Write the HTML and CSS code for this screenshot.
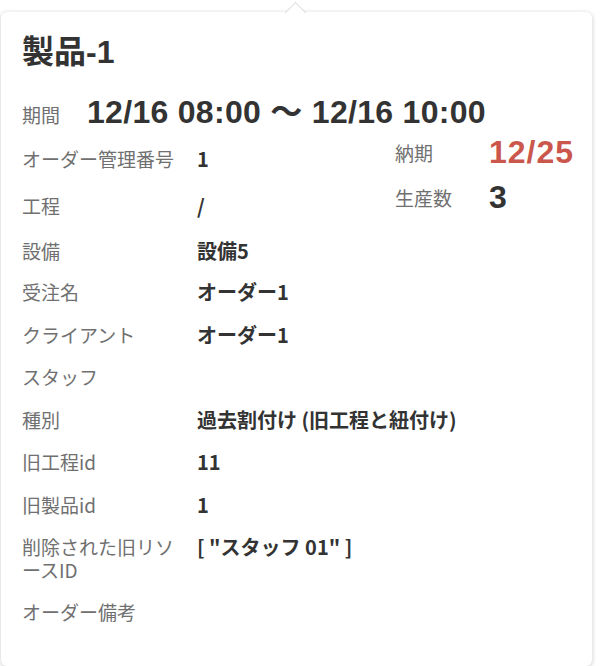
FILE: index.html
```html
<!DOCTYPE html>
<html>
<head>
    <meta charset="utf-8" />
    <title>製品-1</title>
    <link rel="stylesheet" href="styles.css">
</head>
<body>
    <div class="popover">
        <h1 class="title">製品-1</h1>

        <div class="period">
            <span class="period-label">期間</span>
            <span class="period-value">12/16 08:00 〜 12/16 10:00</span>
        </div>

        <div class="top">
            <div class="top-left">
                <div class="row"><span class="label">オーダー管理番号</span><span class="value">1</span></div>
                <div class="row"><span class="label">工程</span><span class="value">/</span></div>
                <div class="row"><span class="label">設備</span><span class="value">設備5</span></div>
            </div>
            <div class="summary">
                <div class="summary-row"><span class="summary-label">納期</span><span class="summary-value due">12/25</span></div>
                <div class="summary-row"><span class="summary-label">生産数</span><span class="summary-value">3</span></div>
            </div>
        </div>

        <div class="list">
            <div class="row"><span class="label">受注名</span><span class="value">オーダー1</span></div>
            <div class="row"><span class="label">クライアント</span><span class="value">オーダー1</span></div>
            <div class="row"><span class="label">スタッフ</span><span class="value"></span></div>
            <div class="row"><span class="label">種別</span><span class="value">過去割付け (旧工程と紐付け)</span></div>
            <div class="row"><span class="label">旧工程id</span><span class="value">11</span></div>
            <div class="row"><span class="label">旧製品id</span><span class="value">1</span></div>
            <div class="row"><span class="label">削除された旧リソースID</span><span class="value">[ "スタッフ 01" ]</span></div>
            <div class="row"><span class="label">オーダー備考</span><span class="value"></span></div>
        </div>
    </div>
</body>
</html>
```

FILE: styles.css
```css
body {
    margin: 0;
    background-color: #FFF;
    font-family: "Liberation Sans", "Noto Sans CJK JP", sans-serif;
    color: #333;
}

div.popover {
    position: relative;
    margin: 12px 0 0 1px;
    width: 591px;
    box-sizing: border-box;
    padding: 22px 22px 32px 21px;
    background-color: #FFF;
    border-radius: 6px;
    box-shadow: 0 1px 5px rgba(0, 0, 0, 0.22);
}

div.popover:before {
    content: '';
    position: absolute;
    top: -7px;
    left: 287px;
    width: 14px;
    height: 14px;
    background-color: #FFF;
    border-top: 1px solid #DCDCDC;
    border-left: 1px solid #DCDCDC;
    transform: rotate(45deg);
}

h1.title {
    margin: 0;
    font-size: 32px;
    line-height: 36px;
    font-weight: bold;
    color: #333;
}

div.period {
    display: flex;
    align-items: baseline;
    margin-top: 22px;
    height: 40px;
}

span.period-label {
    width: 65px;
    font-family: "Noto Sans CJK JP", sans-serif;
    font-size: 19px;
    color: #707070;
}

span.period-value {
    font-size: 32px;
    line-height: 40px;
    letter-spacing: 0.3px;
    font-weight: bold;
    color: #333;
}

div.top {
    display: flex;
    align-items: flex-start;
    margin-top: 4px;
}

div.top-left {
    flex: none;
    width: 373px;
}

div.row {
    display: flex;
    align-items: flex-start;
    padding: 10px 0;
    line-height: 22.5px;
}

div.top-left div.row {
    padding: 11px 0;
    line-height: 23px;
}

div.top-left div.row:first-child {
    padding-bottom: 13px;
}

div.top-left div.row:last-child {
    padding-bottom: 9px;
}

span.label {
    flex: none;
    width: 160px;
    margin-right: 15px;
    font-family: "Noto Sans CJK JP", sans-serif;
    font-size: 19px;
    color: #707070;
}

span.value {
    font-family: "Noto Sans CJK JP", sans-serif;
    font-size: 20px;
    font-weight: bold;
    color: #333;
}

div.summary {
    flex: none;
    margin-top: -2px;
}

div.summary-row {
    display: flex;
    align-items: center;
    height: 36px;
    margin-bottom: 9px;
}

span.summary-label {
    flex: none;
    width: 94px;
    font-family: "Noto Sans CJK JP", sans-serif;
    font-size: 19px;
    color: #707070;
}

span.summary-value {
    font-size: 32px;
    line-height: 36px;
    font-weight: bold;
    color: #333;
}

span.summary-value.due {
    letter-spacing: 1px;
    color: #CB574C;
}
```
